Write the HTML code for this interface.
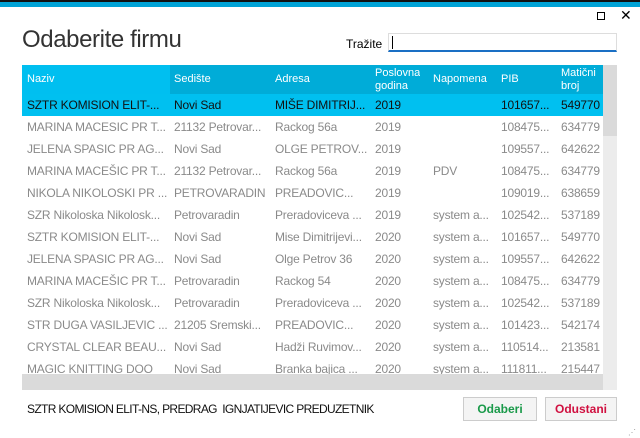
<!DOCTYPE html>
<html><head><style>
body{margin:0;width:640px;height:438px;background:#fff;position:relative;overflow:hidden;font-family:"Liberation Sans",sans-serif}
.a{position:absolute}
.t{position:absolute;font-size:12px;white-space:nowrap;overflow:hidden}
</style></head><body>
<div class="a" style="left:0;top:0;width:640px;height:2px;background:#111"></div>
<div class="a" style="left:0;top:2px;width:640px;height:5px;background:#00a3d6"></div>
<div class="a" style="left:597px;top:12px;width:8px;height:8px;border:1.5px solid #000;box-sizing:border-box"></div>
<div class="a" style="left:620px;top:7px;font-size:14px">✕</div>
<div class="a" style="left:22px;top:26px;font-size:24px;color:#333;letter-spacing:-0.4px">Odaberite firmu</div>
<div class="a" style="left:346px;top:37px;font-size:12px">Tražite</div>
<div class="a" style="left:388px;top:33px;width:229px;height:19px;border:1px solid #ddd;border-bottom:2px solid #1a6fc4;box-sizing:border-box"></div>
<div class="a" style="left:392px;top:36px;width:1px;height:13px;background:#000"></div>
<div class="a" style="left:22px;top:65px;width:581px;height:29px;background:#00acd8"></div>
<div class="a" style="left:22px;top:65px;width:148px;height:29px;background:#00bff0"></div>
<div class="a" style="left:603px;top:65px;width:14px;height:309px;background:#ececec"></div>
<div class="a" style="left:603px;top:65px;width:14px;height:71px;background:#dadada"></div>
<div id="g"></div>
<div class="a" style="left:27px;top:402px;font-size:12px;color:#111;letter-spacing:-0.65px">SZTR KOMISION ELIT-NS, PREDRAG &nbsp;IGNJATIJEVIC PREDUZETNIK</div>
<div class="a" style="left:463px;top:397px;width:74px;height:24px;border:1px solid #ccc;background:#f4f4f4;box-sizing:border-box;text-align:center;line-height:22px;font-size:12px;color:#1a9a4a;font-weight:bold">Odaberi</div>
<div class="a" style="left:545px;top:397px;width:72px;height:24px;border:1px solid #ccc;background:#f4f4f4;box-sizing:border-box;text-align:center;line-height:22px;font-size:12px;color:#d01040;font-weight:bold">Odustani</div>
<div class="a" style="left:628px;top:428px;font-size:8px;color:#999">⋰</div>
<script>
var cols=[[27,140],[174,94],[275,94],[375,52],[433,62],[501,57],[561,42]];
var h=[["Naziv"],["Sedište"],["Adresa"],["Poslovna","godina"],["Napomena"],["PIB"],["Matični","broj"]];
var rows=[
["SZTR KOMISION ELIT-...","Novi Sad","MIŠE DIMITRIJ...","2019","","101657...","549770"],
["MARINA MACESIC PR T...","21132 Petrovar...","Rackog 56a","2019","","108475...","634779"],
["JELENA SPASIC PR AG...","Novi Sad","OLGE PETROV...","2019","","109557...","642622"],
["MARINA MACEŠIC PR T...","21132 Petrovar...","Rackog 56a","2019","PDV","108475...","634779"],
["NIKOLA NIKOLOSKI PR ...","PETROVARADIN","PREADOVIC...","2019","","109019...","638659"],
["SZR Nikoloska Nikolosk...","Petrovaradin","Preradoviceva ...","2019","system a...","102542...","537189"],
["SZTR KOMISION ELIT-...","Novi Sad","Mise Dimitrijevi...","2020","system a...","101657...","549770"],
["JELENA SPASIC PR AG...","Novi Sad","Olge Petrov 36","2020","system a...","109557...","642622"],
["MARINA MACEŠIC PR T...","Petrovaradin","Rackog 54","2020","system a...","108475...","634779"],
["SZR Nikoloska Nikolosk...","Petrovaradin","Preradoviceva ...","2020","system a...","102542...","537189"],
["STR DUGA  VASILJEVIC ...","21205 Sremski...","PREADOVIC...","2020","system a...","101423...","542174"],
["CRYSTAL CLEAR BEAU...","Novi Sad","Hadži Ruvimov...","2020","system a...","110514...","213581"],
["MAGIC KNITTING DOO","Novi Sad","Branka bajica ...","2020","system a...","111811...","215447"]];
var s="";
h.forEach(function(x,i){var c=cols[i];if(x.length==1)s+='<div class="t" style="left:'+c[0]+'px;top:73px;color:#fff;font-size:11px">'+x[0]+'</div>';else s+='<div class="t" style="left:'+c[0]+'px;top:67px;color:#fff;font-size:11px;line-height:13px">'+x[0]+'<br>'+x[1]+'</div>';});
s+='<div class="a" style="left:22px;top:94px;width:581px;height:22px;background:#00c0f0"></div>';
rows.forEach(function(r,j){var y=94+j*22;var cl=j==0?'#111':'#8a8a8a';r.forEach(function(v,i){var c=cols[i];s+='<div class="t" style="left:'+c[0]+'px;top:'+(y+4)+'px;width:'+c[1]+'px;color:'+cl+';letter-spacing:-0.2px">'+v+'</div>';});});
document.getElementById('g').innerHTML=s;
</script>
<div class="a" style="left:22px;top:374px;width:595px;height:16px;background:#dadada"></div>
<div class="a" style="left:603px;top:374px;width:14px;height:16px;background:#ececec"></div>
</body></html>
